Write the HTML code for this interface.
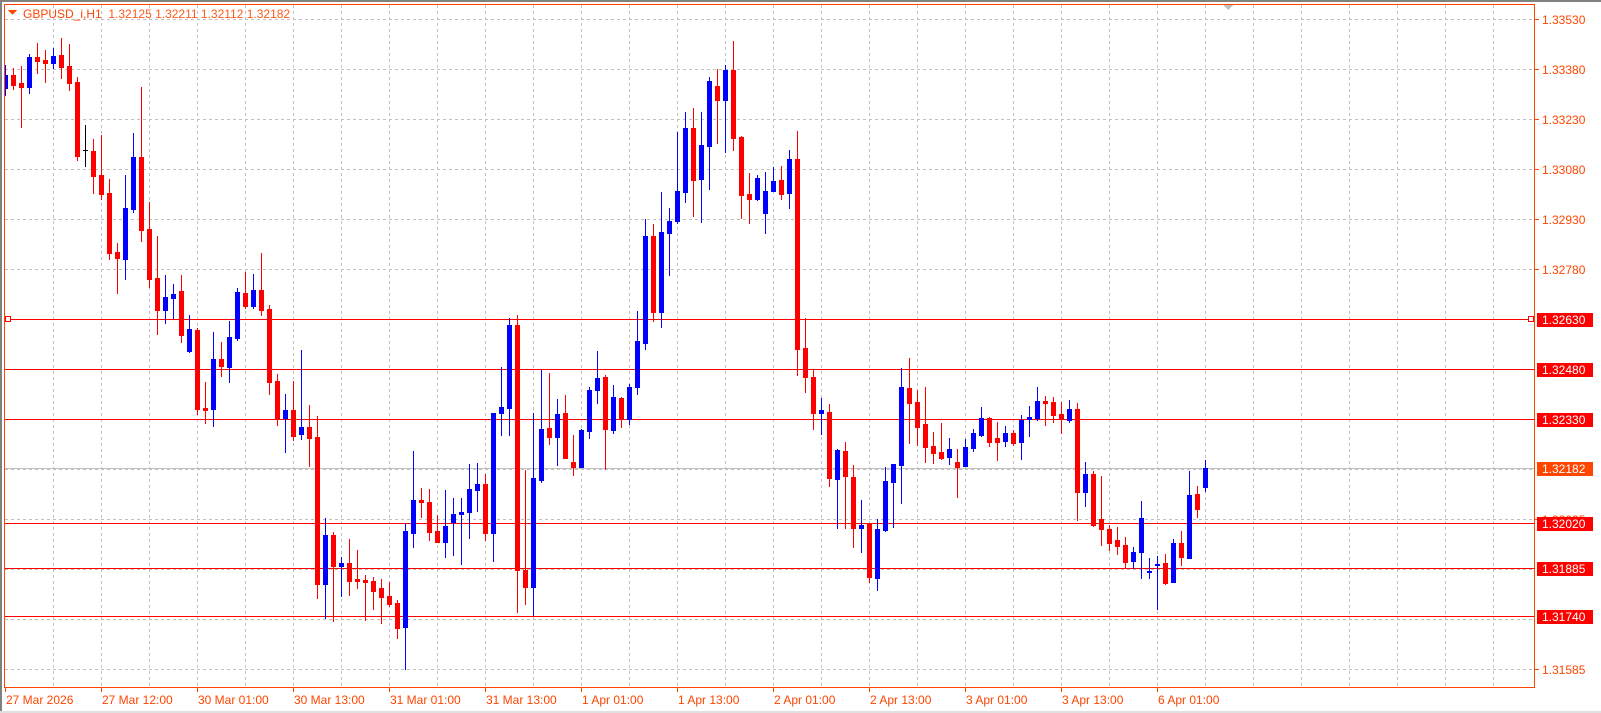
<!DOCTYPE html>
<html><head><meta charset="utf-8">
<style>
html,body{margin:0;padding:0;background:#fff;width:1601px;height:713px;overflow:hidden}
svg{display:block}
text{font-family:"Liberation Sans",sans-serif;font-size:12px}
</style></head>
<body>
<svg id="s" width="1601" height="713" viewBox="0 0 1601 713" xmlns="http://www.w3.org/2000/svg" shape-rendering="crispEdges">
<rect x="0" y="0" width="1601" height="713" fill="#fff"/>
<rect x="0" y="0" width="1601" height="2" fill="#808080"/>
<rect x="0" y="0" width="2" height="713" fill="#808080"/>
<rect x="0" y="711" width="1601" height="2" fill="#e0e0e0"/>
<g id="grid" stroke="#c0c0c0" stroke-width="1" stroke-dasharray="3,3"></g>
<g id="lines"></g>
<g id="candles"></g>
<rect x="4.5" y="4.5" width="1530" height="683" fill="none" stroke="#ff4500" stroke-width="1"/>
<polygon points="1223,5 1233,5 1228,10" fill="#c0c0c0"/>
<polygon points="8,10 17,10 12.5,15" fill="#ff4500"/>
<text x="23" y="18" fill="#ff4500">GBPUSD_i,H1 <tspan fill="#ff5a1a">&#160;1.32125 1.32211 1.32112 1.32182</tspan></text>
<g id="axis"></g>
</svg>
<script>
var NS="http://www.w3.org/2000/svg";
function el(p,t,a,txt){var e=document.createElementNS(NS,t);for(var k in a)e.setAttribute(k,a[k]);if(txt!=null)e.textContent=txt;document.getElementById(p).appendChild(e);return e;}
for(var k=0;k<14;k++){var y=19+50*k+0.5;el('grid','line',{x1:5,y1:y,x2:1535,y2:y});}
for(var k=1;k<32;k++){var x=Math.round(5.3+48*k)+0.5;if(x<1535)el('grid','line',{x1:x,y1:5,x2:x,y2:687});}
el('lines','line',{x1:5,y1:468.5,x2:1535,y2:468.5,stroke:'#c0c0c0'});
[[319,'1.32630'],[369,'1.32480'],[419,'1.32330'],[523,'1.32020'],[568,'1.31885'],[616,'1.31740']].forEach(function(l){
 el('lines','line',{x1:5,y1:l[0]+0.5,x2:1535,y2:l[0]+0.5,stroke:'#ff0000'});
});
el('lines','rect',{x:5.5,y:316.5,width:5,height:5,fill:'#fff',stroke:'#ff0000'});
el('lines','rect',{x:1528.5,y:316.5,width:5,height:5,fill:'#fff',stroke:'#ff0000'});
var D=[[65,75,88,95,'b'],[68,75,85,89,'r'],[66,83,87,127,'r'],[54,57,87,93,'b'],[43,57,61,73,'r'],[50,60,63,82,'r'],[48,56,63,68,'b'],[38,55,67,78,'r'],[44,66,83,90,'r'],[77,82,156,160,'r'],
[125,150,150,166,'k'],[139,151,176,193,'r'],[135,175,194,199,'r'],[179,193,253,259,'r'],[243,252,258,293,'r'],[175,208,259,279,'b'],[133,157,209,212,'b'],[87,157,230,241,'r'],[202,229,279,287,'r'],[236,278,310,334,'r'],
[275,297,310,323,'b'],[284,294,298,318,'b'],[275,291,335,342,'r'],[315,329,351,352,'b'],[328,330,409,414,'r'],[382,408,410,423,'r'],[332,359,409,426,'b'],[342,359,366,376,'r'],[321,337,367,382,'b'],[288,292,338,340,'b'],
[272,293,306,308,'r'],[274,290,306,308,'b'],[253,290,310,315,'r'],[305,309,382,394,'r'],[374,381,418,425,'r'],[394,410,418,452,'b'],[381,410,436,440,'r'],[350,427,434,439,'b'],[405,427,438,466,'r'],[416,437,584,598,'r'],
[518,535,584,618,'b'],[532,535,566,621,'r'],[557,563,566,596,'b'],[539,563,581,595,'r'],[550,579,581,588,'r'],[575,580,582,620,'r'],[577,581,591,609,'r'],[579,588,597,623,'r'],[582,596,604,606,'r'],[600,603,628,638,'r'],
[523,531,627,669,'b'],[451,500,533,547,'b'],[488,500,502,517,'r'],[489,502,532,540,'r'],[515,531,542,542,'r'],[490,526,542,557,'b'],[498,514,522,555,'b'],[498,512,514,564,'b'],[464,489,512,538,'b'],[463,484,490,511,'b'],
[474,484,533,540,'r'],[413,413,533,561,'b'],[367,407,413,435,'b'],[318,325,408,435,'b'],[315,325,570,612,'r'],[470,570,587,604,'r'],[413,478,587,615,'b'],[370,429,480,482,'b'],[373,428,437,444,'r'],[399,414,437,465,'b'],
[395,413,458,458,'r'],[435,462,467,475,'r'],[429,430,467,467,'b'],[387,390,431,438,'b'],[351,378,390,403,'b'],[375,377,429,469,'r'],[385,397,430,433,'b'],[397,398,419,427,'r'],[384,387,419,424,'b'],[311,341,387,394,'b'],
[219,236,343,349,'b'],[224,236,312,321,'r'],[192,232,312,327,'b'],[208,221,233,275,'b'],[132,191,221,223,'b'],[112,128,192,202,'b'],[108,128,180,216,'r'],[112,145,179,222,'b'],[77,81,146,189,'b'],[69,86,100,143,'r'],
[65,70,100,152,'b'],[41,70,138,150,'r'],[136,137,195,218,'r'],[173,194,199,223,'r'],[175,178,199,200,'b'],[172,191,213,233,'b'],[167,181,191,191,'b'],[166,180,194,199,'r'],[150,159,193,208,'b'],[131,159,349,375,'r'],
[318,348,377,392,'r'],[370,377,413,429,'r'],[398,410,413,434,'b'],[404,412,478,486,'r'],[449,450,479,528,'b'],[442,451,476,528,'r'],[465,477,528,547,'r'],[500,525,528,552,'b'],[523,523,577,582,'r'],[519,529,578,590,'b'],
[467,481,530,531,'b'],[464,464,482,527,'b'],[368,387,465,503,'b'],[358,388,403,443,'r'],[390,402,427,445,'r'],[387,424,447,462,'r'],[432,446,453,463,'r'],[423,452,458,459,'r'],[438,449,457,464,'b'],[449,462,467,497,'r'],
[439,447,466,466,'b'],[429,433,448,451,'b'],[407,418,435,436,'b'],[417,418,442,446,'r'],[422,438,442,460,'r'],[426,433,441,446,'b'],[430,433,443,445,'r'],[415,420,442,459,'b'],[406,417,419,436,'b'],[387,401,418,420,'b'],
[396,401,403,425,'r'],[397,402,415,422,'r'],[402,414,419,433,'r'],[400,409,420,422,'b'],[403,409,492,520,'r'],[462,474,492,506,'b'],[471,474,525,526,'r'],[476,519,529,545,'r'],[525,529,543,550,'r'],[527,540,546,554,'r'],
[537,545,562,568,'r'],[547,552,561,568,'b'],[501,518,552,578,'b'],[558,571,572,578,'b'],[556,564,565,609,'b'],[554,563,583,584,'r'],[539,543,582,582,'b'],[531,543,557,565,'r'],[471,495,558,558,'b'],[486,494,509,517,'r'],
[460,468,487,491,'b']];
var C={r:'#ff0000',b:'#0000ff',k:'#000000'};
D.forEach(function(d,i){
 var w=5+8*i,col=C[d[4]];
 el('candles','rect',{x:w,y:d[0],width:1,height:Math.max(1,d[3]-d[0]+1),fill:col});
 if(d[4]==='k'){el('candles','rect',{x:w-2,y:d[1],width:5,height:1,fill:col});}
 else{var bx=Math.max(5,w-2);el('candles','rect',{x:bx,y:d[1],width:w+3-bx,height:Math.max(2,d[2]-d[1]+1),fill:col});}
});
var pl=[[19,'1.33530'],[69,'1.33380'],[119,'1.33230'],[169,'1.33080'],[219,'1.32930'],[269,'1.32780'],[519,'1.32035'],[669,'1.31585']];
pl.forEach(function(p){el('axis','rect',{x:1535,y:p[0],width:4,height:1,fill:'#ff4500'});el('axis','text',{x:1542,y:p[0]+5,fill:'#ff4500'},p[1]);});
[[319,'1.32630','#ff0000'],[369,'1.32480','#ff0000'],[419,'1.32330','#ff0000'],[468,'1.32182','#ff4500'],[523,'1.32020','#ff0000'],[568,'1.31885','#ff0000'],[616,'1.31740','#ff0000']].forEach(function(p){
 el('axis','rect',{x:1537,y:p[0]-6,width:56,height:14,fill:p[2]});
 el('axis','text',{x:1542,y:p[0]+5,fill:'#ffffff'},p[1]);
});
var tl=['27 Mar 2026','27 Mar 12:00','30 Mar 01:00','30 Mar 13:00','31 Mar 01:00','31 Mar 13:00','1 Apr 01:00','1 Apr 13:00','2 Apr 01:00','2 Apr 13:00','3 Apr 01:00','3 Apr 13:00','6 Apr 01:00'];
tl.forEach(function(t,i){var x=5+96*i;el('axis','rect',{x:x,y:688,width:1,height:4,fill:'#ff4500'});el('axis','text',{x:x+1,y:704,fill:'#ff4500'},t);});
</script>
</body></html>
